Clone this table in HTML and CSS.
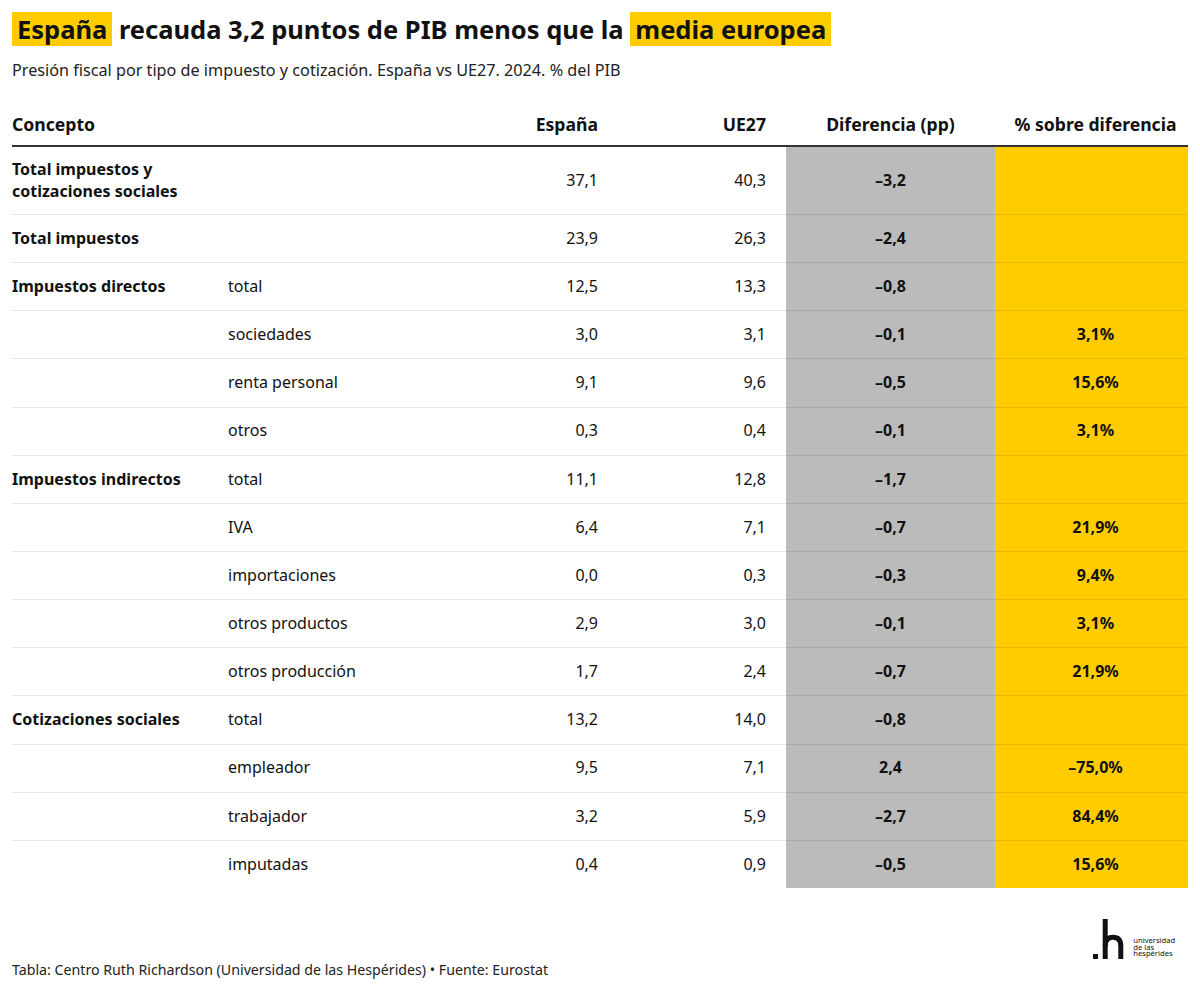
FILE: index.html
```html
<!DOCTYPE html>
<html lang="es">
<head>
<meta charset="utf-8">
<title>España recauda 3,2 puntos de PIB menos que la media europea</title>
<link rel="stylesheet" href="styles.css">
</head>
<body>
<div class="page">
  <h1 class="title"><span class="hl">España</span> recauda 3,2 puntos de PIB menos que la <span class="hl">media europea</span></h1>
  <p class="subtitle">Presión fiscal por tipo de impuesto y cotización. España vs UE27. 2024. % del PIB</p>

  <table class="data">
    <colgroup>
      <col class="c-concept"><col class="c-sub"><col class="c-es"><col class="c-ue"><col class="c-diff"><col class="c-pct">
    </colgroup>
    <thead>
      <tr>
        <th class="left">Concepto</th>
        <th></th>
        <th class="num">España</th>
        <th class="num ue">UE27</th>
        <th class="center">Diferencia (pp)</th>
        <th class="center pct">% sobre diferencia</th>
      </tr>
    </thead>
    <tbody>
      <tr class="tall">
        <td class="label">Total impuestos y<br>cotizaciones sociales</td><td></td>
        <td class="num">37,1</td><td class="num ue">40,3</td><td class="diff">–3,2</td><td class="pct"></td>
      </tr>
      <tr>
        <td class="label">Total impuestos</td><td></td>
        <td class="num">23,9</td><td class="num ue">26,3</td><td class="diff">–2,4</td><td class="pct"></td>
      </tr>
      <tr>
        <td class="label">Impuestos directos</td><td class="sub">total</td>
        <td class="num">12,5</td><td class="num ue">13,3</td><td class="diff">–0,8</td><td class="pct"></td>
      </tr>
      <tr>
        <td></td><td class="sub">sociedades</td>
        <td class="num">3,0</td><td class="num ue">3,1</td><td class="diff">–0,1</td><td class="pct">3,1%</td>
      </tr>
      <tr>
        <td></td><td class="sub">renta personal</td>
        <td class="num">9,1</td><td class="num ue">9,6</td><td class="diff">–0,5</td><td class="pct">15,6%</td>
      </tr>
      <tr>
        <td></td><td class="sub">otros</td>
        <td class="num">0,3</td><td class="num ue">0,4</td><td class="diff">–0,1</td><td class="pct">3,1%</td>
      </tr>
      <tr>
        <td class="label">Impuestos indirectos</td><td class="sub">total</td>
        <td class="num">11,1</td><td class="num ue">12,8</td><td class="diff">–1,7</td><td class="pct"></td>
      </tr>
      <tr>
        <td></td><td class="sub">IVA</td>
        <td class="num">6,4</td><td class="num ue">7,1</td><td class="diff">–0,7</td><td class="pct">21,9%</td>
      </tr>
      <tr>
        <td></td><td class="sub">importaciones</td>
        <td class="num">0,0</td><td class="num ue">0,3</td><td class="diff">–0,3</td><td class="pct">9,4%</td>
      </tr>
      <tr>
        <td></td><td class="sub">otros productos</td>
        <td class="num">2,9</td><td class="num ue">3,0</td><td class="diff">–0,1</td><td class="pct">3,1%</td>
      </tr>
      <tr>
        <td></td><td class="sub">otros producción</td>
        <td class="num">1,7</td><td class="num ue">2,4</td><td class="diff">–0,7</td><td class="pct">21,9%</td>
      </tr>
      <tr>
        <td class="label">Cotizaciones sociales</td><td class="sub">total</td>
        <td class="num">13,2</td><td class="num ue">14,0</td><td class="diff">–0,8</td><td class="pct"></td>
      </tr>
      <tr>
        <td></td><td class="sub">empleador</td>
        <td class="num">9,5</td><td class="num ue">7,1</td><td class="diff">2,4</td><td class="pct">–75,0%</td>
      </tr>
      <tr>
        <td></td><td class="sub">trabajador</td>
        <td class="num">3,2</td><td class="num ue">5,9</td><td class="diff">–2,7</td><td class="pct">84,4%</td>
      </tr>
      <tr class="last">
        <td></td><td class="sub">imputadas</td>
        <td class="num">0,4</td><td class="num ue">0,9</td><td class="diff">–0,5</td><td class="pct">15,6%</td>
      </tr>
    </tbody>
  </table>

  <footer class="footer">
    <p class="source">Tabla: Centro Ruth Richardson (Universidad de las Hespérides) • Fuente: Eurostat</p>
    <svg class="logo" width="92" height="48" viewBox="0 0 92 48" aria-label="universidad de las hespérides">
      <rect x="3" y="36" width="5" height="5" fill="#111"/>
      <rect x="12.7" y="1" width="5" height="40" fill="#111"/>
      <path d="M15.2 28 C15.2 22 18 19.2 23 19.2 C28 19.2 30.8 22 30.8 28 V41" fill="none" stroke="#111" stroke-width="5"/>
      <text x="43.3" y="24.5" class="logo-text">universidad</text>
      <text x="43.3" y="31.5" class="logo-text">de las</text>
      <text x="43.3" y="38.2" class="logo-text">hespérides</text>
    </svg>
  </footer>
</div>
</body>
</html>
```

FILE: styles.css
```css
* { box-sizing: border-box; }

html, body {
  margin: 0;
  padding: 0;
  background: #ffffff;
}

body {
  font-family: "Noto Sans", "Open Sans", "DejaVu Sans", sans-serif;
  color: #111111;
}

.page {
  width: 1200px;
  padding: 12px 12px 0 12px;
}

.title {
  margin: 0;
  font-size: 25.5px;
  font-weight: 700;
  line-height: 34px;
  color: #111;
}

.hl {
  display: inline-block;
  background: #ffcc00;
  padding: 0 5px;
  line-height: 34px;
}

.subtitle {
  margin: 13px 0 0 0;
  font-size: 16.2px;
  line-height: 22px;
  color: #222;
}

.data {
  margin-top: 21px;
  width: 1176px;
  border-collapse: collapse;
  table-layout: fixed;
  font-size: 16px;
}

.c-concept { width: 216px; }
.c-sub { width: 242px; }
.c-es { width: 128px; }
.c-ue { width: 188px; }
.c-diff { width: 209px; }
.c-pct { width: 193px; }

.data th {
  height: 44px;
  padding: 0;
  font-weight: 700;
  font-size: 17.6px;
  vertical-align: middle;
  border-bottom: 2px solid #333333;
  white-space: nowrap;
}

.data th.left { text-align: left; }
.data th.num, .data td.num { text-align: right; }
.data th.center { text-align: center; }
.data .ue { padding-right: 20px; }
.data .pct { padding-left: 8px; }

.data td {
  height: 48.15px;
  padding: 0;
  vertical-align: middle;
  line-height: 21.5px;
  border-bottom: 1px solid rgba(0, 0, 0, 0.09);
  white-space: nowrap;
}

.data tr.tall td { height: 68.5px; }
.data tr.last td { border-bottom: none; }

.data td.label { font-weight: 700; }
.data td.sub { padding-left: 0; }

.data td.diff {
  background: #bbbbbb;
  text-align: center;
  font-weight: 700;
}

.data td.pct {
  background: #ffcc00;
  text-align: center;
  font-weight: 700;
}

.footer {
  margin-top: 30px;
  display: flex;
  justify-content: space-between;
  align-items: flex-start;
}

.source {
  margin: 43px 0 0 0;
  font-size: 14.2px;
  line-height: 18px;
  color: #222;
}

.logo {
  display: block;
  margin-right: 6px;
}

.logo-text {
  font-family: "Noto Sans", sans-serif;
  font-size: 7.6px;
  fill: #111;
}
```
